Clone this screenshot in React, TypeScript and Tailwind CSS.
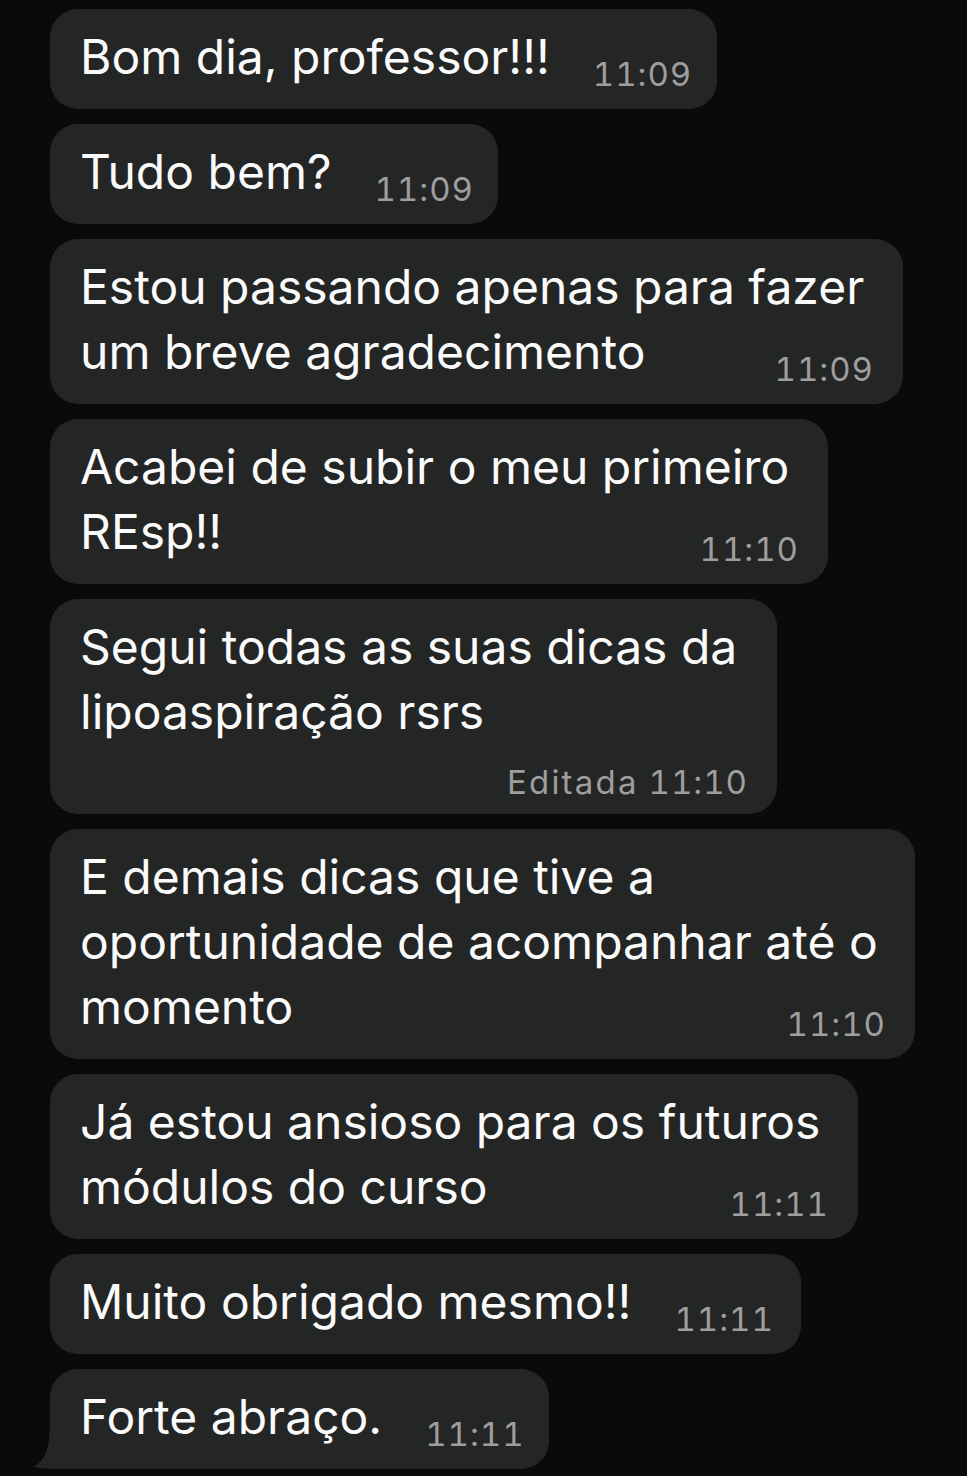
import React from 'react'

type Msg = {
  lines: string[]
  time: string
  width: number
  edited?: boolean
  tail?: boolean
}

const messages: Msg[] = [
  { lines: ['Bom dia, professor!!!'], time: '11:09', width: 667 },
  { lines: ['Tudo bem?'], time: '11:09', width: 448 },
  { lines: ['Estou passando apenas para fazer', 'um breve agradecimento'], time: '11:09', width: 853 },
  { lines: ['Acabei de subir o meu primeiro', 'REsp!!'], time: '11:10', width: 778 },
  { lines: ['Segui todas as suas dicas da', 'lipoaspiração rsrs'], time: '11:10', width: 727, edited: true },
  { lines: ['E demais dicas que tive a', 'oportunidade de acompanhar até o', 'momento'], time: '11:10', width: 865 },
  { lines: ['Já estou ansioso para os futuros', 'módulos do curso'], time: '11:11', width: 808 },
  { lines: ['Muito obrigado mesmo!!'], time: '11:11', width: 751 },
  { lines: ['Forte abraço.'], time: '11:11', width: 499, tail: true },
]

function Time({ children }: { children: React.ReactNode }) {
  return (
    <span className="text-[33px] leading-[33px] text-[#9e9e9e] tabular-nums tracking-[1px] whitespace-nowrap translate-y-[2px] mr-[-1px]">
      {children}
    </span>
  )
}

function Bubble({ msg }: { msg: Msg }) {
  const head = msg.lines.slice(0, -1)
  const last = msg.lines[msg.lines.length - 1]

  return (
    <div
      className={`relative bg-[#242525] rounded-[28px] pl-[30px] pr-[30px] pt-[15px] ${msg.edited ? 'pb-[17px]' : 'pb-[20px]'} ${msg.tail ? 'rounded-bl-none' : ''}`}
      style={{ width: msg.width }}
    >
      {head.map((line) => (
        <div key={line} className="whitespace-nowrap">{line}</div>
      ))}

      {msg.edited ? (
        <>
          <div className="whitespace-nowrap">{last}</div>
          <div className="flex justify-end mt-[20px]">
            <Time>
              <span className="tracking-[2.2px]">Editada</span>&nbsp;{msg.time}
            </Time>
          </div>
        </>
      ) : (
        <div className="flex items-end justify-between gap-[43px]">
          <span className="whitespace-nowrap">{last}</span>
          <Time>{msg.time}</Time>
        </div>
      )}

      {/* tail */}
      {msg.tail && (
        <svg className="absolute left-[-20px] bottom-0" width="40" height="60" viewBox="0 0 40 60">
          <path d="M20 0 L20 12 C20 40 15 52 3 58 C14 60 30 60 40 60 L40 0 Z" fill="#242525" />
        </svg>
      )}
    </div>
  )
}

export default function App() {
  return (
    <div
      className="w-[967px] h-[1476px] overflow-hidden bg-[#0a0a0a] text-[#fafafa] text-[48px] leading-[65px]"
      style={{ fontFamily: 'Inter, "Noto Sans", sans-serif' }}
    >
      <div className="flex flex-col items-start gap-[15px] pl-[50px] pt-[9px]">
        {messages.map((m, i) => (
          <Bubble key={i} msg={m} />
        ))}
      </div>
    </div>
  )
}
